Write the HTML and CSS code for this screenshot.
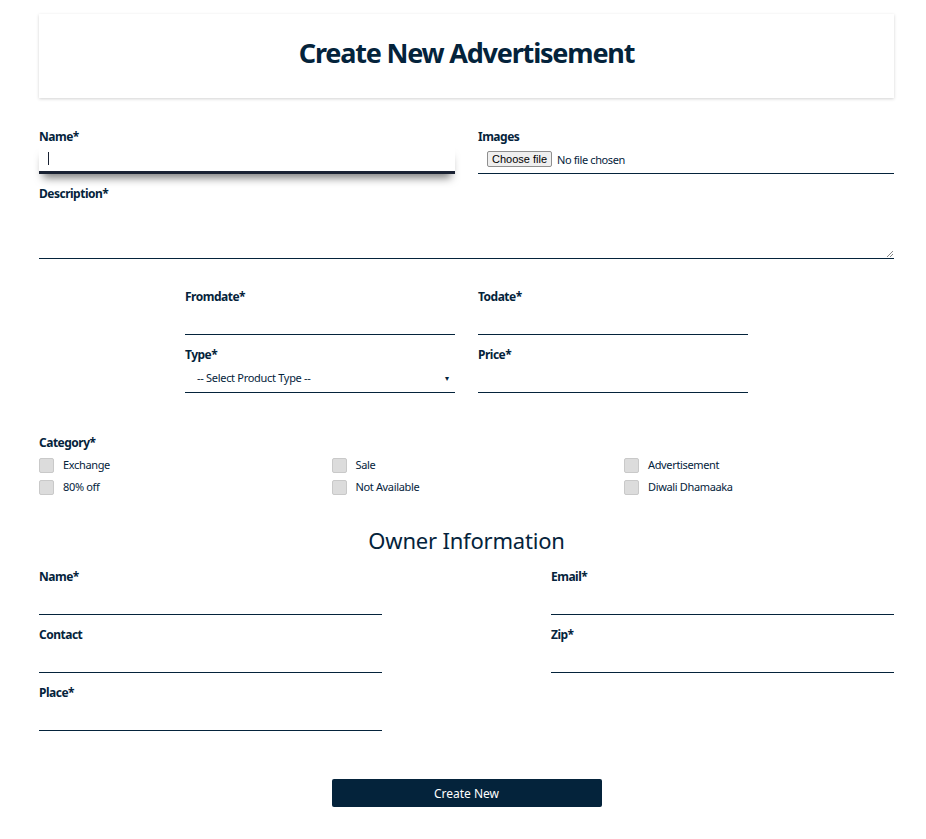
FILE: index.html
```html
<!DOCTYPE html>
<html>
<head>
    <title>Create New Advertisement</title>
    <meta charset="utf-8">
    <meta name="viewport" content="width=device-width, initial-scale=1.0">
    <link rel="stylesheet" href="styles.css">
</head>
<body>

    <main class="page">
        <header class="title-card">
            <h1>Create New Advertisement</h1>
        </header>

        <form class="ad-form">
            <div class="row two">
                <div class="field">
                    <label>Name*</label>
                    <div class="input focused"><span class="caret"></span></div>
                </div>
                <div class="field">
                    <label>Images</label>
                    <div class="input file">
                        <span class="file-btn">Choose file</span>
                        <span class="file-text">No file chosen</span>
                    </div>
                </div>
            </div>

            <div class="field">
                <label>Description*</label>
                <div class="input textarea">
                    <svg class="grip" width="7" height="7" viewBox="0 0 7 7">
                        <path d="M1 7 L7 1 M4 7 L7 4" stroke="#888" stroke-width="1" fill="none"/>
                    </svg>
                </div>
            </div>

            <div class="row narrow">
                <div class="field">
                    <label>Fromdate*</label>
                    <div class="input"></div>
                </div>
                <div class="field">
                    <label>Todate*</label>
                    <div class="input"></div>
                </div>
                <div class="field">
                    <label>Type*</label>
                    <div class="input select">
                        <span>-- Select Product Type --</span>
                        <span class="arrow">▾</span>
                    </div>
                </div>
                <div class="field">
                    <label>Price*</label>
                    <div class="input"></div>
                </div>
            </div>

            <div class="category">
                <label>Category*</label>
                <div class="checks">
                    <div class="check"><span class="box"></span>Exchange</div>
                    <div class="check"><span class="box"></span>Sale</div>
                    <div class="check"><span class="box"></span>Advertisement</div>
                    <div class="check"><span class="box"></span>80% off</div>
                    <div class="check"><span class="box"></span>Not Available</div>
                    <div class="check"><span class="box"></span>Diwali Dhamaaka</div>
                </div>
            </div>

            <h2>Owner Information</h2>

            <div class="row owner">
                <div class="field">
                    <label>Name*</label>
                    <div class="input"></div>
                </div>
                <div class="field">
                    <label>Email*</label>
                    <div class="input"></div>
                </div>
                <div class="field">
                    <label>Contact</label>
                    <div class="input"></div>
                </div>
                <div class="field">
                    <label>Zip*</label>
                    <div class="input"></div>
                </div>
                <div class="field">
                    <label>Place*</label>
                    <div class="input"></div>
                </div>
            </div>

            <div class="actions">
                <button type="button" class="submit">Create New</button>
            </div>
        </form>
    </main>

</body>
</html>
```

FILE: styles.css
```css
body {
    margin: 0;
    background-color: white;
    color: #04233b;
    font-family: "Noto Sans", "Open Sans", sans-serif;
}

.page {
    width: 855px;
    padding: 14px 0 0 39px;
}

.title-card {
    height: 84px;
    box-sizing: border-box;
    padding-bottom: 8px;
    box-shadow: 0 1px 3px rgba(0, 0, 0, .18);
    display: flex;
    align-items: center;
    justify-content: center;
}

h1 {
    margin: 0;
    font-size: 27px;
    font-weight: 700;
    letter-spacing: -1.2px;
}

h2 {
    margin: 30px 0 14px;
    text-align: center;
    font-size: 22px;
    font-weight: 400;
    line-height: 30px;
    letter-spacing: -0.2px;
}

.ad-form {
    padding-top: 31px;
}

label {
    display: block;
    font-size: 12px;
    font-weight: 700;
    line-height: 16px;
    letter-spacing: -0.5px;
}

.row {
    display: grid;
}

.row.two {
    grid-template-columns: 1fr 1fr;
    column-gap: 23px;
}

.row.narrow {
    grid-template-columns: 270px 270px;
    column-gap: 23px;
    justify-content: center;
    padding-top: 18px;
}

.row.owner {
    grid-template-columns: 343px 343px;
    justify-content: space-between;
}

.field {
    padding-bottom: 12px;
}

.input {
    height: 29px;
    border-bottom: 1px solid #04233b;
    font-size: 11px;
    display: flex;
    align-items: center;
}

.input.focused {
    border-bottom: 3px solid #1a2233;
    height: 26px;
    box-shadow: 0 8px 8px -4px rgba(0, 0, 0, .5);
}

.caret {
    width: 1px;
    height: 13px;
    background-color: #1a2233;
    margin-left: 9px;
}

.input.file {
    height: 28px;
    padding-left: 9px;
}

.file-btn {
    font-family: "Liberation Sans", Arial, sans-serif;
    font-size: 11px;
    color: black;
    background-color: #efefef;
    border: 1px solid #8f8f8f;
    border-radius: 2px;
    padding: 1px 4px;
    margin-right: 5px;
}

.file-text {
    font-size: 11px;
    letter-spacing: -0.4px;
}

.input.textarea {
    height: 56px;
    position: relative;
}

.grip {
    position: absolute;
    right: 1px;
    bottom: 1px;
}

.input.select {
    justify-content: space-between;
    padding: 0 6px 0 12px;
    font-size: 11px;
    letter-spacing: -0.3px;
    color: #04233b;
}

.arrow {
    font-size: 8px;
}

.category {
    padding-top: 30px;
}

.checks {
    display: grid;
    grid-template-columns: repeat(3, 270px);
    column-gap: 22.5px;
    row-gap: 6px;
    padding-top: 6px;
}

.check {
    display: flex;
    align-items: center;
    font-size: 11px;
    line-height: 16px;
    letter-spacing: -0.35px;
}

.box {
    width: 13px;
    height: 13px;
    border: 1px solid #c9c9c9;
    border-radius: 2px;
    background-color: #dcdcdc;
    margin-right: 9px;
}

.actions {
    display: flex;
    justify-content: center;
    padding-top: 36px;
}

.submit {
    width: 270px;
    height: 28px;
    border: none;
    border-radius: 2px;
    background-color: #04233b;
    color: white;
    font-family: "Noto Sans", sans-serif;
    font-size: 12px;
}
```
